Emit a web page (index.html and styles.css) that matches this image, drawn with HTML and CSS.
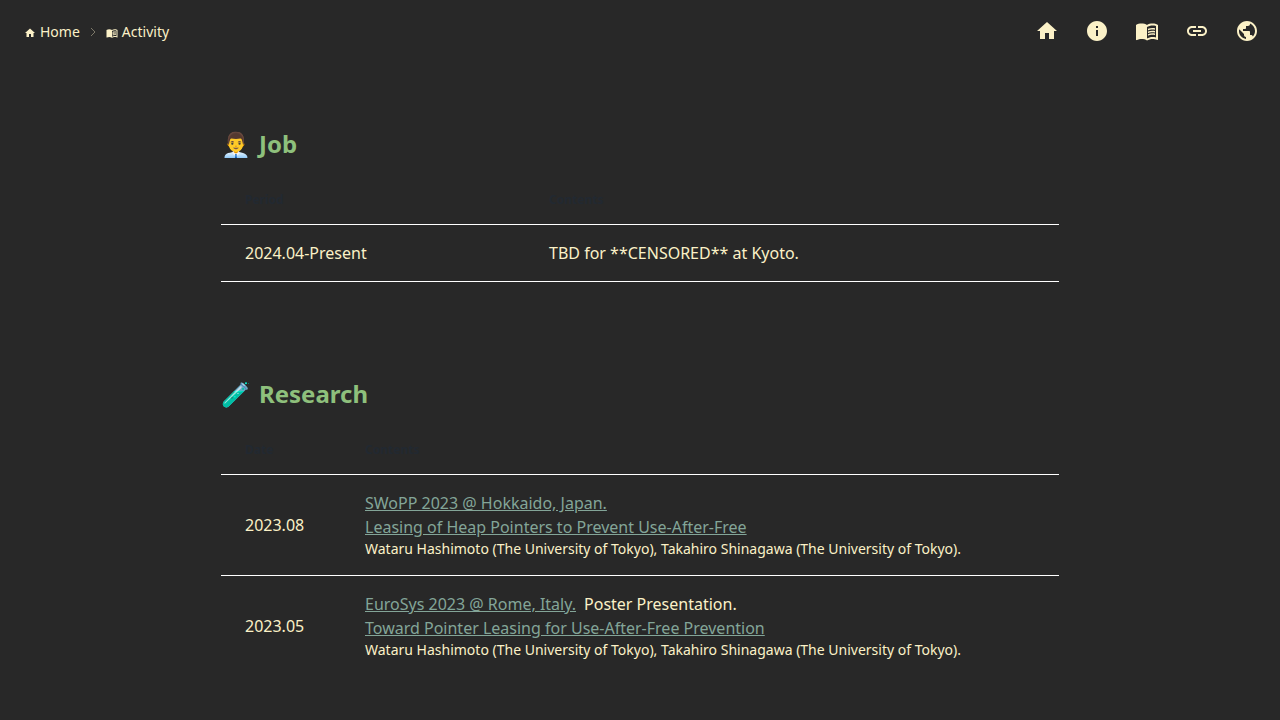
FILE: index.html
```html
<!DOCTYPE html>
<html lang="en">
<head>
<meta charset="utf-8">
<title>Activity</title>
<link rel="stylesheet" href="styles.css">
</head>
<body>
<header class="topbar">
  <nav class="crumbs" aria-label="Breadcrumb">
    <a href="#home"><svg viewBox="0 0 24 24"><path d="M10 20v-6h4v6h5v-8h3L12 3 2 12h3v8z"/></svg>Home</a>
    <svg class="sep" viewBox="0 0 16 16"><path d="m6 4 4 4-4 4"/></svg>
    <a href="#activity"><svg viewBox="0 0 24 24"><use href="#book"/></svg>Activity</a>
  </nav>
  <nav class="icons" aria-label="Main">
    <a href="#home" aria-label="Home"><svg viewBox="0 0 24 24"><path d="M10 20v-6h4v6h5v-8h3L12 3 2 12h3v8z"/></svg></a>
    <a href="#about" aria-label="About"><svg viewBox="0 0 24 24"><path d="M12 2C6.48 2 2 6.48 2 12s4.48 10 10 10 10-4.48 10-10S17.52 2 12 2zm1 15h-2v-6h2v6zm0-8h-2V7h2v2z"/></svg></a>
    <a href="#activity" aria-label="Activity"><svg viewBox="0 0 24 24"><g id="book"><path d="M21 5c-1.11-.35-2.33-.5-3.5-.5-1.95 0-4.05.4-5.5 1.5-1.45-1.1-3.55-1.5-5.5-1.5S2.450 4.900 1 6v14.650c0 .25.25.5.5.5.1 0 .15-.05.25-.05C3.100 20.450 5.050 20 6.500 20c1.950 0 4.050.4 5.500 1.500 1.350-.85 3.800-1.500 5.500-1.500 1.650 0 3.350.3 4.750 1.050.1.05.15.05.25.05.25 0 .5-.25.5-.5V6c-.6-.45-1.250-.75-2-1zm0 13.500c-1.100-.35-2.300-.5-3.500-.5-1.700 0-4.150.65-5.500 1.500V8c1.350-.85 3.800-1.500 5.500-1.500 1.200 0 2.400.15 3.500.5v11.500z"/><path d="M17.500 10.500c.88 0 1.730.09 2.500.26V9.240c-.79-.15-1.640-.24-2.500-.24-1.700 0-3.240.29-4.500.83v1.660c1.130-.64 2.700-.99 4.500-.99zM13 12.490v1.660c1.130-.64 2.700-.99 4.500-.99.88 0 1.730.09 2.500.26V11.900c-.79-.15-1.640-.24-2.500-.24-1.700 0-3.240.3-4.500.83zM17.500 14.330c-1.700 0-3.240.29-4.500.83v1.660c1.130-.64 2.700-.99 4.500-.99.88 0 1.730.09 2.500.26v-1.520c-.79-.16-1.640-.24-2.500-.24z"/></g></svg></a>
    <a href="#links" aria-label="Links"><svg viewBox="0 0 24 24"><path d="M3.900 12c0-1.710 1.390-3.100 3.100-3.100h4V7H7c-2.760 0-5 2.240-5 5s2.240 5 5 5h4v-1.900H7c-1.710 0-3.100-1.390-3.100-3.100zM8 13h8v-2H8v2zm9-6h-4v1.900h4c1.710 0 3.100 1.390 3.100 3.100s-1.390 3.100-3.100 3.100h-4V17h4c2.760 0 5-2.240 5-5s-2.240-5-5-5z"/></svg></a>
    <a href="#language" aria-label="Language"><svg viewBox="0 0 24 24"><path d="M12 2C6.480 2 2 6.480 2 12s4.480 10 10 10 10-4.480 10-10S17.520 2 12 2zm-1 17.930c-3.950-.49-7-3.850-7-7.930 0-.62.08-1.210.21-1.790L9 15v1c0 1.100.9 2 2 2v1.930zm6.900-2.540c-.26-.81-1-1.390-1.900-1.390h-1v-3c0-.55-.45-1-1-1H8v-2h2c.55 0 1-.45 1-1V7h2c1.100 0 2-.9 2-2v-.41c2.930 1.190 5 4.060 5 7.410 0 2.080-.8 3.970-2.100 5.390z"/></svg></a>
  </nav>
</header>
<main class="content">
  <section>
    <h2><span>👨‍💼</span>Job</h2>
    <table class="job">
      <thead><tr><th>Period</th><th>Contents</th></tr></thead>
      <tbody><tr><td>2024.04-Present</td><td>TBD for **CENSORED** at Kyoto.</td></tr></tbody>
    </table>
  </section>
  <section>
    <h2><span>🧪</span>Research</h2>
    <table class="research">
      <thead><tr><th>Date</th><th>Contents</th></tr></thead>
      <tbody>
        <tr><td>2023.08</td><td><a href="#swopp">SWoPP 2023 @ Hokkaido, Japan.</a><br><a href="#leasing">Leasing of Heap Pointers to Prevent Use-After-Free</a><p>Wataru Hashimoto (The University of Tokyo), Takahiro Shinagawa (The University of Tokyo).</p></td></tr>
        <tr><td>2023.05</td><td><a href="#eurosys">EuroSys 2023 @ Rome, Italy.</a><span class="note">Poster Presentation.</span><br><a href="#toward">Toward Pointer Leasing for Use-After-Free Prevention</a><p>Wataru Hashimoto (The University of Tokyo), Takahiro Shinagawa (The University of Tokyo).</p></td></tr>
      </tbody>
    </table>
  </section>
</main>
</body>
</html>
```
FILE: styles.css
```css
* { box-sizing: border-box; }
body { margin: 0; background: #282828; color: #fbf1c7; font: 16px/24px "Noto Sans", sans-serif; }
svg { fill: currentColor; }
.topbar { display: flex; justify-content: space-between; align-items: flex-start; padding: 19px 21px 19px 24px; }
.crumbs { display: flex; align-items: center; gap: 5px; padding-top: 3px; font-size: 14px; line-height: 20px; }
.crumbs a { display: flex; align-items: center; gap: 4px; color: inherit; text-decoration: none; }
.crumbs svg { width: 12px; height: 12px; margin-top: 1px; }
.crumbs .sep { width: 16px; height: 16px; margin-top: 0; fill: none; stroke: #7c7869; stroke-width: 1; }
.icons { display: flex; gap: 26px; }
.icons a { display: flex; color: inherit; }
.icons svg { width: 24px; height: 24px; }
.content { width: 66%; max-width: 838px; margin: 0 auto; padding-top: 64px; }
section + section { margin-top: 94px; }
h2 { display: flex; gap: 8px; margin: 0; font-size: 24px; line-height: 36px; font-weight: 700; color: #8ec07c; }
table { width: 100%; margin-top: 14px; border-collapse: collapse; table-layout: fixed; }
th, td { padding: 16px 24px; text-align: left; border-bottom: 1px solid #fff; }
th { padding: 12px 24px; font-size: 12px; color: #222931; }
.job th:first-child { width: 304px; }
.research th:first-child { width: 120px; }
td a { color: #83a598; text-decoration: underline; }
td p { margin: 0; font-size: 14px; line-height: 20px; }
.note { margin-left: 8px; }
.research tbody tr:last-child td { border-bottom: 0; }
```
